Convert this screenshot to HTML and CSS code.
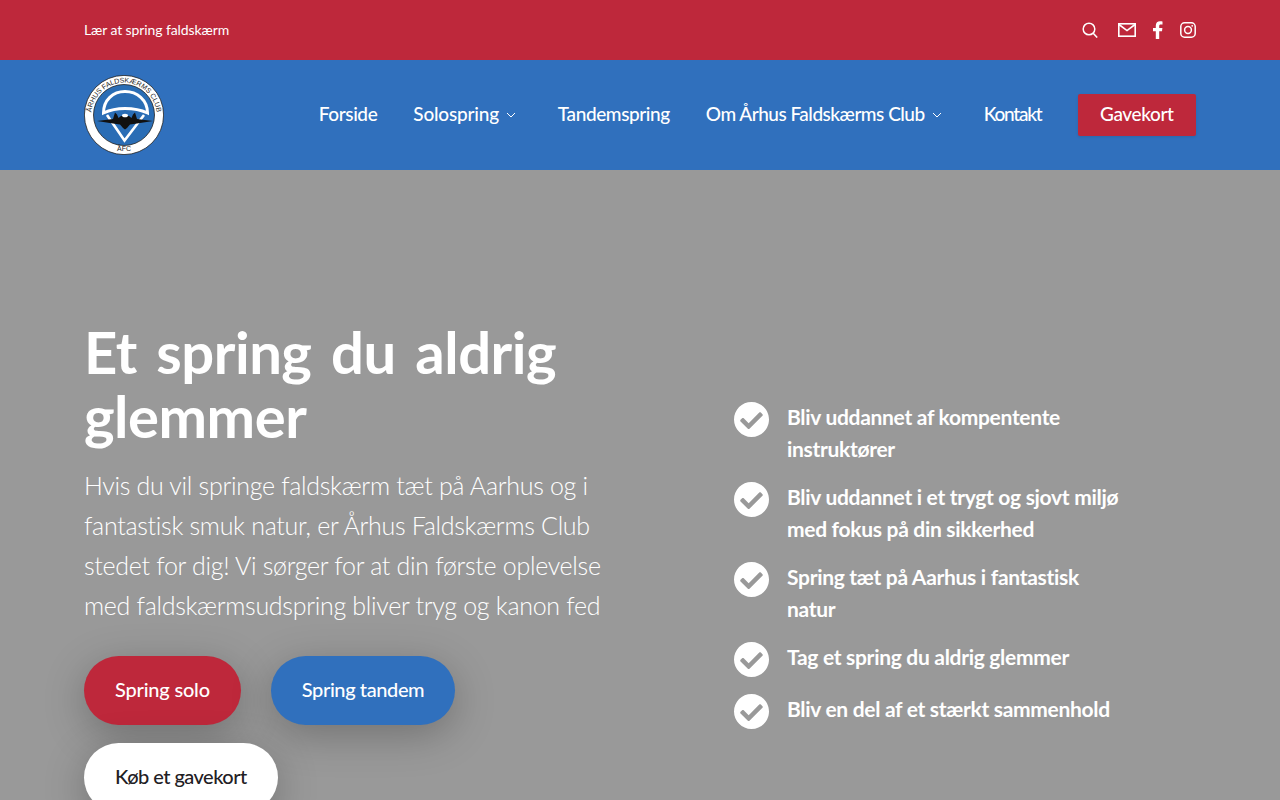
FILE: index.html
```html
<!DOCTYPE html>
<html lang="da">
<head>
    <meta charset="UTF-8">
    <meta name="viewport" content="width=device-width, initial-scale=1.0">
    <title>Århus Faldskærms Club</title>
    <link rel="stylesheet" href="styles.css">
</head>
<body>

    <div class="topbar">
        <span class="tagline">Lær at spring faldskærm</span>
        <div class="top-icons">
            <svg class="icon-search" viewBox="0 0 16 16" width="16" height="16" fill="none" stroke="#fff" stroke-width="1.5">
                <circle cx="7" cy="7" r="5.8"/>
                <path d="M11.2 11.2 15.2 15.6"/>
            </svg>
            <svg class="icon-mail" viewBox="0 0 18 14" width="18" height="14" fill="none" stroke="#fff" stroke-width="1.6">
                <rect x="0.8" y="0.8" width="16.4" height="12.4"/>
                <path d="M1 1.5 9 7.6 17 1.5"/>
            </svg>
            <svg class="icon-fb" viewBox="0 0 11 18" width="11" height="18" fill="#fff">
                <path d="M7.2 18V10.2H10L10.4 7H7.2V5C7.2 4 7.5 3.4 8.8 3.4H10.5V.5C10.2.4 9.2.3 8 .3 5.5.3 3.8 1.8 3.8 4.6V7H1V10.2H3.8V18Z"/>
            </svg>
            <svg class="icon-insta" viewBox="0 0 16 16" width="16" height="16" fill="none" stroke="#fff" stroke-width="1.5">
                <rect x="0.8" y="0.8" width="14.4" height="14.4" rx="3.8"/>
                <circle cx="8" cy="8" r="3.4"/>
                <circle cx="12.2" cy="3.8" r="0.9" fill="#fff" stroke="none"/>
            </svg>
        </div>
    </div>

    <header class="navbar">
        <svg class="logo" viewBox="0 0 80 80" width="80" height="80">
            <defs>
                <path id="logo-arc" d="M7.500 44A32.700 32.700 0 1 1 72.500 44"/>
            </defs>
            <circle cx="40" cy="40" r="39.600" fill="#fff" stroke="#222" stroke-width="0.800"/>
            <circle cx="40" cy="40" r="30.500" fill="#2a6db5" stroke="#222" stroke-width="0.800"/>
            <text class="logo-text"><textPath href="#logo-arc" startOffset="50%" text-anchor="middle">ÅRHUS FALDSKÆRMS CLUB</textPath></text>
            <text class="logo-text" x="40" y="76" text-anchor="middle">ÅFC</text>
            <path d="M19.500 38C19.500 25 29 16.500 41 16.500S63.500 25 63.500 38C56 34.500 49 33.500 41 33.500S27 34.500 19.500 38Z" fill="#2a6db5" stroke="#fff" stroke-width="3"/>
            <path d="M23 40 40.500 65.500 60 40" fill="none" stroke="#fff" stroke-width="2.600"/>
            <path d="M13 46 29 44 31 37.500 33 39.500 34.500 43 37 41H45L47.500 43 49 39.500 51 37.500 53 44 69 46 53 48.500 46 49.500 43 53 41 54.500 39 53 36 49.500 29 48.500Z" fill="#111"/>
            <ellipse cx="41" cy="40.500" rx="3" ry="1.800" fill="#fff"/>
        </svg>
        <nav class="menu">
            <a href="#">Forside</a>
            <a href="#" class="has-sub menu-solo">Solospring
                <svg class="chev" viewBox="0 0 12 8" width="12" height="8" fill="none" stroke="#fff" stroke-width="1"><path d="M2 2 6 6 10 2"/></svg>
            </a>
            <a href="#">Tandemspring</a>
            <a href="#" class="has-sub menu-om">Om Århus Faldskærms Club
                <svg class="chev" viewBox="0 0 12 8" width="12" height="8" fill="none" stroke="#fff" stroke-width="1"><path d="M2 2 6 6 10 2"/></svg>
            </a>
            <a href="#" class="menu-kontakt">Kontakt</a>
            <a href="#" class="gift-button">Gavekort</a>
        </nav>
    </header>

    <section class="hero">
        <div class="hero-left">
            <h1>Et spring du aldrig glemmer</h1>
            <p>Hvis du vil springe faldskærm tæt på Aarhus og i fantastisk smuk natur, er Århus Faldskærms Club stedet for dig! Vi sørger for at din første oplevelse med faldskærmsudspring bliver tryg og kanon fed</p>
            <div class="hero-buttons">
                <a href="#" class="pill pill-red">Spring solo</a>
                <a href="#" class="pill pill-blue">Spring tandem</a>
                <a href="#" class="pill pill-white">Køb et gavekort</a>
            </div>
        </div>
        <ul class="checks">
            <li>
                <svg class="check" viewBox="8 8 496 496" width="35" height="35"><path fill="#fff" d="M504 256c0 136.967-111.033 248-248 248S8 392.967 8 256 119.033 8 256 8s248 111.033 248 248zM227.314 387.314l184-184c6.248-6.248 6.248-16.379 0-22.627l-22.627-22.627c-6.248-6.249-16.379-6.249-22.628 0L216 308.118l-70.059-70.059c-6.248-6.248-16.379-6.248-22.628 0l-22.627 22.627c-6.248 6.248-6.248 16.379 0 22.627l104 104c6.249 6.25 16.379 6.25 22.628.001z"/></svg>
                <span>Bliv uddannet af kompentente instruktører</span>
            </li>
            <li>
                <svg class="check" viewBox="8 8 496 496" width="35" height="35"><path fill="#fff" d="M504 256c0 136.967-111.033 248-248 248S8 392.967 8 256 119.033 8 256 8s248 111.033 248 248zM227.314 387.314l184-184c6.248-6.248 6.248-16.379 0-22.627l-22.627-22.627c-6.248-6.249-16.379-6.249-22.628 0L216 308.118l-70.059-70.059c-6.248-6.248-16.379-6.248-22.628 0l-22.627 22.627c-6.248 6.248-6.248 16.379 0 22.627l104 104c6.249 6.25 16.379 6.25 22.628.001z"/></svg>
                <span>Bliv uddannet i et trygt og sjovt miljø med fokus på din sikkerhed</span>
            </li>
            <li>
                <svg class="check" viewBox="8 8 496 496" width="35" height="35"><path fill="#fff" d="M504 256c0 136.967-111.033 248-248 248S8 392.967 8 256 119.033 8 256 8s248 111.033 248 248zM227.314 387.314l184-184c6.248-6.248 6.248-16.379 0-22.627l-22.627-22.627c-6.248-6.249-16.379-6.249-22.628 0L216 308.118l-70.059-70.059c-6.248-6.248-16.379-6.248-22.628 0l-22.627 22.627c-6.248 6.248-6.248 16.379 0 22.627l104 104c6.249 6.25 16.379 6.25 22.628.001z"/></svg>
                <span>Spring tæt på Aarhus i fantastisk natur</span>
            </li>
            <li>
                <svg class="check" viewBox="8 8 496 496" width="35" height="35"><path fill="#fff" d="M504 256c0 136.967-111.033 248-248 248S8 392.967 8 256 119.033 8 256 8s248 111.033 248 248zM227.314 387.314l184-184c6.248-6.248 6.248-16.379 0-22.627l-22.627-22.627c-6.248-6.249-16.379-6.249-22.628 0L216 308.118l-70.059-70.059c-6.248-6.248-16.379-6.248-22.628 0l-22.627 22.627c-6.248 6.248-6.248 16.379 0 22.627l104 104c6.249 6.25 16.379 6.25 22.628.001z"/></svg>
                <span>Tag et spring du aldrig glemmer</span>
            </li>
            <li>
                <svg class="check" viewBox="8 8 496 496" width="35" height="35"><path fill="#fff" d="M504 256c0 136.967-111.033 248-248 248S8 392.967 8 256 119.033 8 256 8s248 111.033 248 248zM227.314 387.314l184-184c6.248-6.248 6.248-16.379 0-22.627l-22.627-22.627c-6.248-6.249-16.379-6.249-22.628 0L216 308.118l-70.059-70.059c-6.248-6.248-16.379-6.248-22.628 0l-22.627 22.627c-6.248 6.248-6.248 16.379 0 22.627l104 104c6.249 6.25 16.379 6.25 22.628.001z"/></svg>
                <span>Bliv en del af et stærkt sammenhold</span>
            </li>
        </ul>
    </section>

</body>
</html>
```

FILE: styles.css
```css
html, body {
    height: 800px;
    overflow: hidden;
}

body {
    margin: 0;
    font-family: Lato, "Open Sans", sans-serif;
    background-color: #999;
    color: white;
}

a {
    color: inherit;
    text-decoration: none;
}

.topbar {
    height: 60px;
    padding: 0 84px;
    display: flex;
    align-items: center;
    justify-content: space-between;
    background-color: #be283b;
}

.tagline {
    margin-top: -2px;
    font-size: 14px;
    letter-spacing: -0.1px;
}

.top-icons {
    display: flex;
    align-items: center;
    gap: 17px;
    margin-top: -1px;
}

.icon-mail {
    margin: 0 -1px 0 3px;
}

.navbar {
    height: 110px;
    padding: 0 84px;
    display: flex;
    align-items: center;
    justify-content: space-between;
    background-color: #3070bd;
}

.logo-text {
    font-family: "Liberation Sans", sans-serif;
    font-size: 7px;
    fill: #222;
}

.menu {
    display: flex;
    align-items: center;
    gap: 36px;
    font-size: 19px;
    font-weight: 500;
    letter-spacing: -0.400px;
}

.menu a {
    padding-bottom: 4px;
}

.has-sub {
    display: flex;
    align-items: center;
    gap: 6px;
    margin-right: 5px;
}

.menu-solo {
    letter-spacing: -0.200px;
}

.menu-om {
    letter-spacing: -0.500px;
}

.menu .menu-kontakt {
    letter-spacing: -1.200px;
}

.chev {
    margin-top: 4px;
}

.menu .gift-button {
    padding: 8px 22.500px 10px;
    line-height: 24px;
    border-radius: 2px;
    background-color: #be283b;
    box-shadow: 0 1px 3px rgba(0, 0, 0, 0.1);
}

.hero {
    padding: 150px 84px;
    display: grid;
    grid-template-columns: 540px 390px;
    column-gap: 110px;
    align-items: center;
}

h1 {
    margin: 0;
    font-size: 58px;
    line-height: 64px;
    font-weight: 700;
    letter-spacing: -0.500px;
    word-spacing: 6px;
}

p {
    margin: 17px 0 0;
    font-size: 25px;
    line-height: 40px;
    font-weight: 300;
    letter-spacing: -0.300px;
}

.hero-buttons {
    margin-top: 31px;
    display: flex;
    flex-wrap: wrap;
    gap: 18px 30px;
}

.pill {
    height: 69px;
    padding: 0 31px 3px;
    display: flex;
    align-items: center;
    box-sizing: border-box;
    border-radius: 35px;
    font-size: 20px;
    font-weight: 500;
    box-shadow: 0 10px 40px rgba(0, 0, 0, 0.25);
}

.pill-red {
    background-color: #be283b;
    letter-spacing: -0.200px;
}

.pill-blue {
    background-color: #3070bd;
    letter-spacing: -0.400px;
}

.pill-white {
    background-color: white;
    color: #1f2024;
    letter-spacing: -0.550px;
}

.checks {
    margin: 0;
    padding: 0;
    list-style: none;
    display: flex;
    flex-direction: column;
    gap: 16px;
}

.checks li {
    display: flex;
    gap: 18px;
    min-height: 36px;
    font-size: 21px;
    line-height: 32px;
    font-weight: 700;
    letter-spacing: -0.300px;
}

.checks span {
    margin: -1px 0 1px;
}

.check {
    flex: none;
}
```
